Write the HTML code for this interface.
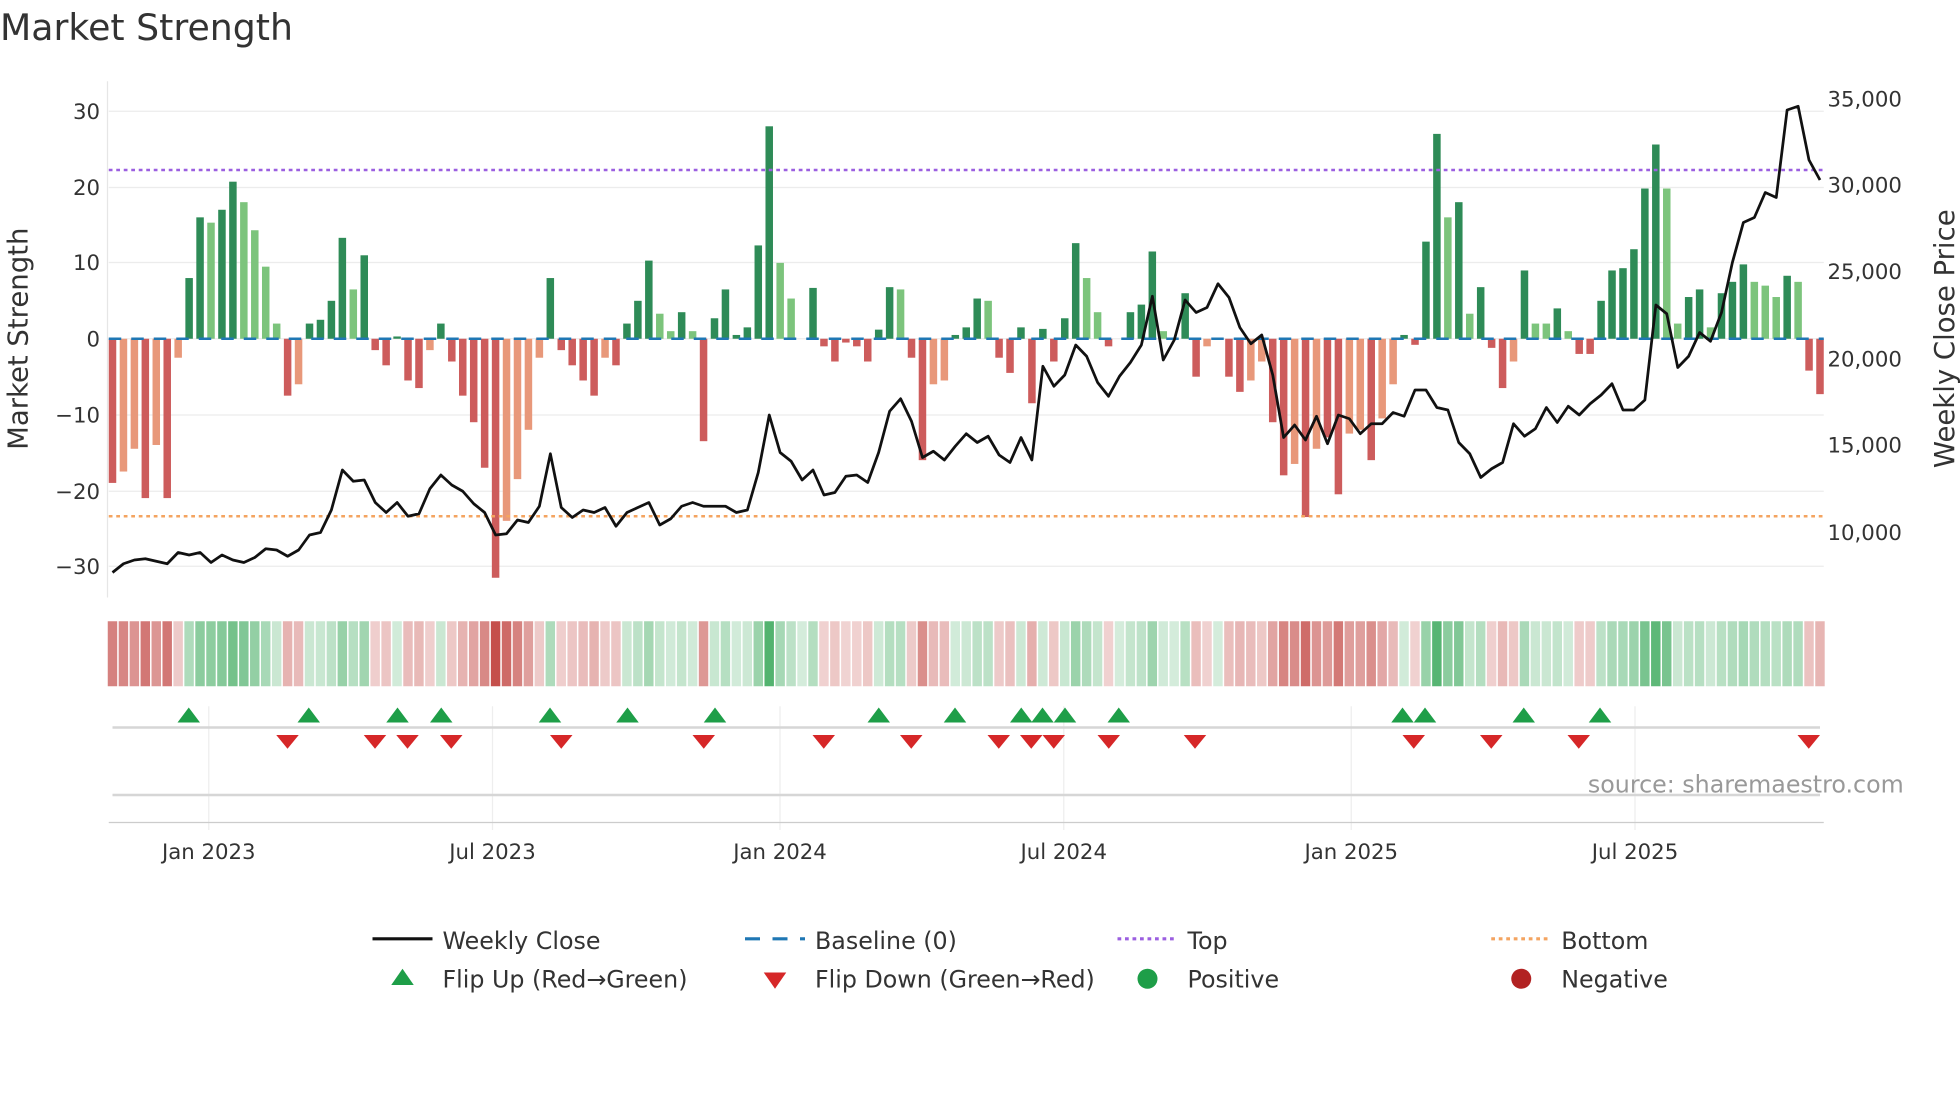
<!DOCTYPE html>
<html><head><meta charset="utf-8"><style>
html,body{margin:0;padding:0;background:#fff;width:1960px;height:1102px;overflow:hidden}
svg{display:block}
text{font-family:"DejaVu Sans","Liberation Sans",sans-serif;fill:#333}
</style></head><body>
<svg id="s" width="1960" height="1102" viewBox="0 0 1568 881.6" preserveAspectRatio="none" xmlns="http://www.w3.org/2000/svg">
<text x="0" y="32" font-size="29" fill="#333">Market Strength</text>
<g id="grid" stroke="#ececec" stroke-width="1"></g>
<line x1="86" y1="65" x2="86" y2="478" stroke="#e6e6e6"/>
<g font-size="17" text-anchor="end">
<text x="80" y="95">30</text><text x="80" y="156">20</text><text x="80" y="216">10</text><text x="80" y="277">0</text><text x="80" y="338">−10</text><text x="80" y="399">−20</text><text x="80" y="459">−30</text>
</g>
<g font-size="17">
<text x="1462" y="85">35,000</text><text x="1462" y="154">30,000</text><text x="1462" y="223">25,000</text><text x="1462" y="293">20,000</text><text x="1462" y="362">15,000</text><text x="1462" y="432">10,000</text>
</g>
<text transform="translate(22,271) rotate(-90)" font-size="22" text-anchor="middle">Market Strength</text>
<text transform="translate(1563,271) rotate(-90)" font-size="22" text-anchor="middle">Weekly Close Price</text>
<g id="bars"></g>
<line x1="87" y1="271" x2="1459" y2="271" stroke="#1f77b4" stroke-width="2" stroke-dasharray="10,8"/>
<line x1="87" y1="136" x2="1459" y2="136" stroke="#9b5fe0" stroke-width="2" stroke-dasharray="3,3"/>
<line x1="87" y1="413" x2="1459" y2="413" stroke="#f4a460" stroke-width="2" stroke-dasharray="3,3"/>
<polyline id="price" fill="none" stroke="#111" stroke-width="2.2" stroke-linejoin="round"/>
<g id="strip"></g>
<g id="vgrid" stroke="#eeeeee"></g>
<line x1="90" y1="582" x2="1456" y2="582" stroke="#d6d6d6" stroke-width="2"/>
<line x1="90" y1="636" x2="1456" y2="636" stroke="#d6d6d6" stroke-width="2"/>
<line x1="87" y1="658" x2="1459" y2="658" stroke="#ccc" stroke-width="1"/>
<g id="flips"></g>
<text x="1523" y="634" font-size="19" text-anchor="end" style="fill:#999">source: sharemaestro.com</text>
<g font-size="17" text-anchor="middle">
<text x="167" y="687">Jan 2023</text><text x="394" y="687">Jul 2023</text><text x="624" y="687">Jan 2024</text><text x="851" y="687">Jul 2024</text><text x="1081" y="687">Jan 2025</text><text x="1308" y="687">Jul 2025</text>
</g>
<g font-size="19">
<line x1="298" y1="751" x2="346" y2="751" stroke="#111" stroke-width="2.5"/><text x="354" y="759">Weekly Close</text>
<line x1="596" y1="751" x2="644" y2="751" stroke="#1f77b4" stroke-width="2.5" stroke-dasharray="12,10"/><text x="652" y="759">Baseline (0)</text>
<line x1="894" y1="751" x2="942" y2="751" stroke="#9b5fe0" stroke-width="2.5" stroke-dasharray="3,3"/><text x="950" y="759">Top</text>
<line x1="1193" y1="751" x2="1241" y2="751" stroke="#f4a460" stroke-width="2.5" stroke-dasharray="3,3"/><text x="1249" y="759">Bottom</text>
<polygon points="313,788 322,775 331,788" fill="#1e9e48"/><text x="354" y="790">Flip Up (Red→Green)</text>
<polygon points="611,778 629,778 620,791" fill="#d62728"/><text x="652" y="790">Flip Down (Green→Red)</text>
<circle cx="918" cy="783" r="8" fill="#1e9e48"/><text x="950" y="790">Positive</text>
<circle cx="1217" cy="783" r="8" fill="#b22222"/><text x="1249" y="790">Negative</text>
</g>
</svg>
<script>
var ns="http://www.w3.org/2000/svg";
function el(p,t,a){var e=document.createElementNS(ns,t);for(var k in a)e.setAttribute(k,a[k]);p.appendChild(e);return e;}
var g=document.getElementById('grid');
[89,150,210,271,332,393,453].forEach(function(y){el(g,'line',{x1:87,x2:1459,y1:y,y2:y});});
var V=[-19,-17.5,-14.5,-21,-14,-21,-2.5,8,16,15.3,17,20.7,18,14.3,9.5,2,-7.5,-6,2,2.5,5,13.3,6.5,11,-1.5,-3.5,0.3,-5.5,-6.5,-1.5,2,-3,-7.5,-11,-17,-31.5,-24,-18.5,-12,-2.5,8,-1.5,-3.5,-5.5,-7.5,-2.5,-3.5,2,5,10.3,3.3,1,3.5,1,-13.5,2.7,6.5,0.5,1.5,12.3,28,10,5.3,0,6.7,-1,-3,-0.5,-1,-3,1.2,6.8,6.5,-2.5,-16,-6,-5.5,0.5,1.5,5.3,5,-2.5,-4.5,1.5,-8.5,1.3,-3,2.7,12.6,8,3.5,-1,0,3.5,4.5,11.5,1,0,6,-5,-1,0,-5,-7,-5.5,-3,-11,-18,-16.5,-23.5,-14.5,-13,-20.5,-12.5,-12,-16,-10.5,-6,0.5,-0.8,12.8,27,16,18,3.3,6.8,-1.2,-6.5,-3,9,2,2,4,1,-2,-2,5,9,9.3,11.8,19.8,25.6,19.8,2,5.5,6.5,1.5,6,7.5,9.8,7.5,7,5.5,8.3,7.5,-4.2,-7.3];
var LL=[1,2,4,6,9,12,13,14,15,17,22,29,36,37,38,39,45,50,51,53,61,62,72,75,76,80,89,90,96,100,104,105,108,110,113,114,116,117,122,124,128,130,131,133,142,143,146,150,151,152,154];
var L={};LL.forEach(function(i){L[i]=1;});
var b=document.getElementById('bars'),st=document.getElementById('strip'),step=(1456-90)/(V.length-1);
V.forEach(function(v,i){var x=90+i*step,h=v*6.07,y=v>=0?271-h:271;
 var c=v>=0?(L[i]?'#7cc47c':'#2e8b57'):(L[i]?'#e8987a':'#cd5c5c');
 el(b,'rect',{x:x-3,y:y,width:6,height:Math.abs(h),fill:c});
 var a=0.22+0.7*Math.min(Math.abs(v)/30,1);
 el(st,'rect',{x:x-4.4+0.6,y:497,width:step-1.2,height:52,fill:v>=0?'#3aa85a':'#c0403c','fill-opacity':a.toFixed(2)});
});
var P=[458,451,448,447,449,451,442,444,442,450,444,448,450,446,439,440,445,440,428,426,408,376,385,384,402,410,402,413,411,391,380,388,393,403,410,428,427,416,418,405,363,406,414,408,410,406,421,410,406,402,420,415,405,402,405,405,405,410,408,378,332,362,369,384,376,396,394,381,380,386,362,329,319,337,366,361,368,357,347,354,349,364,370,350,368,293,309,300,276,285,306,317,301,290,276,237,288,272,240,250,246,227,238,262,275,268,300,350,340,352,333,355,332,335,347,339,339,330,333,312,312,326,328,354,363,382,375,370,339,349,343,326,338,325,332,323,316,307,328,328,320,244,251,294,285,266,273,250,210,178,174,154,158,88,85,128,144];
document.getElementById('price').setAttribute('points',P.map(function(y,i){return (90+i*(1366/(P.length-1))).toFixed(1)+','+y;}).join(' '));
var vg=document.getElementById('vgrid');
[167,394,624,851,1081,1308].forEach(function(x){el(vg,'line',{x1:x,x2:x,y1:565,y2:664});});
var f=document.getElementById('flips');
[151,247,318,353,440,502,572,703,764,817,834,852,895,1122,1140,1219,1280].forEach(function(x){el(f,'polygon',{points:(x-9)+',578 '+x+',566 '+(x+9)+',578',fill:'#1e9e48'});});
[230,300,326,361,449,563,659,729,799,825,843,887,956,1131,1193,1263,1447].forEach(function(x){el(f,'polygon',{points:(x-9)+',588 '+(x+9)+',588 '+x+',599',fill:'#d62728'});});
</script>
</body></html>
